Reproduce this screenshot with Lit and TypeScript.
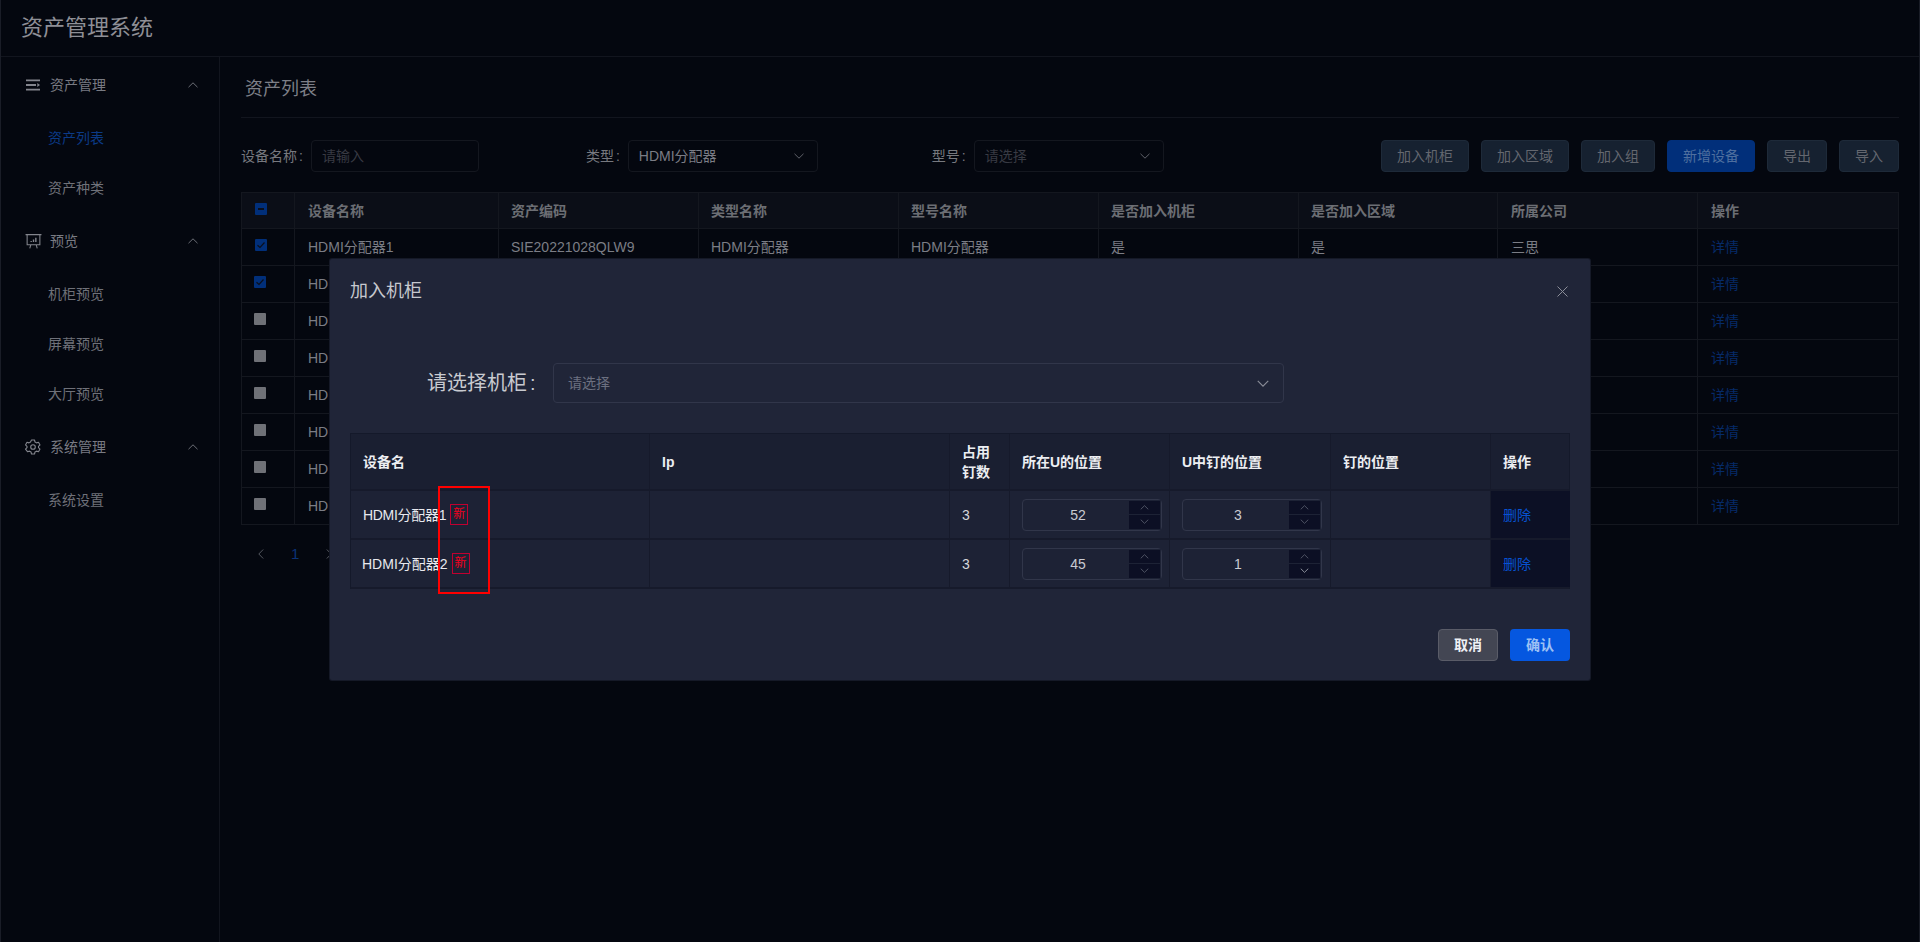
import { LitElement, html, css, svg } from "lit";
import { customElement } from "lit/decorators.js";

const up = (c = "chev") => svg`<svg class=${c} viewBox="0 0 10 6"><path d="M.5 5.2 5 .8l4.500 4.400" fill="none" stroke="currentColor" stroke-width="1"/></svg>`;
const down = (c = "chev") => svg`<svg class=${c} viewBox="0 0 10 6"><path d="M.5 .8 5 5.200 9.500 .8" fill="none" stroke="currentColor" stroke-width="1"/></svg>`;
const left = svg`<svg class="pg" viewBox="0 0 6 10"><path d="M5.200 .5.800 5l4.400 4.500" fill="none" stroke="currentColor"/></svg>`;
const right = svg`<svg class="pg" viewBox="0 0 6 10"><path d="M.8 .5 5.200 5 .8 9.500" fill="none" stroke="currentColor"/></svg>`;

const listIcon = svg`<svg class="mi" viewBox="0 0 16 16"><path d="M1 2.500h14v1.800H1zM1 7.100h10v1.800H1zM1 11.700h14v1.800H1z" fill="currentColor"/><path d="M12.300 6 15 8l-2.700 2z" fill="currentColor"/></svg>`;
const boardIcon = svg`<svg class="mi lg" viewBox="0 0 16 16" fill="none" stroke="currentColor" stroke-width="1"><path d="M.5 1.500h15M2 1.500v9.500h12V1.500M5.500 11l-1 3.500M10.500 11l1 3.500"/><path d="M5.800 8.500V7.500M8 8.500V6M10.200 8.500V4.500" stroke-width="1.300"/></svg>`;
const gearIcon = svg`<svg class="mi" viewBox="0 0 16 16" fill="none" stroke="currentColor" stroke-width="1.100"><path d="M6.500 1h3l.5 2 1.500.9 2-.6 1.500 2.600-1.500 1.400v1.400l1.500 1.400-1.500 2.600-2-.6-1.500.9-.5 2h-3l-.5-2-1.500-.9-2 .6L.5 10.100 2 8.700V7.300L.5 5.900 2 3.300l2 .6L5.500 3z" stroke-linejoin="round"/><circle cx="8" cy="8" r="2.300"/></svg>`;
const checkMark = svg`<svg viewBox="0 0 12 12"><path d="M2.500 6.200 5 8.500 9.500 3.500" fill="none" stroke="#0b0f1c" stroke-width="1.200"/></svg>`;

const menu = [
  { title: "资产管理", icon: listIcon, items: ["资产列表", "资产种类"] },
  { title: "预览", icon: boardIcon, items: ["机柜预览", "屏幕预览", "大厅预览"] },
  { title: "系统管理", icon: gearIcon, items: ["系统设置"] },
];
const cols = ["设备名称", "资产编码", "类型名称", "型号名称", "是否加入机柜", "是否加入区域", "所属公司", "操作"];

@customElement("app-root")
export class AppRoot extends LitElement {
  static styles = css`
    :host {
      display: block;
      height: 942px;
      overflow: hidden;
      position: relative;
      background: #04070f;
      font: 14px/20px "Liberation Sans", "Noto Sans CJK SC", sans-serif;
      color: #7b7d85;
      box-sizing: border-box;
      border-left: 1px solid #1a1d27;
      border-right: 1px solid #1a1d27;
    }
    * { box-sizing: border-box; }
    .top { height: 57px; padding-left: 20px; display: flex; align-items: center; border-bottom: 1px solid #12151e; font-size: 22px; line-height: 30px; color: #8e8f96; }
    .body { display: flex; height: 885px; }
    .side { width: 219px; flex: none; padding-top: 3px; border-right: 1px solid #12151e; }
    .mt { height: 50px; display: flex; align-items: center; padding-left: 24px; color: #797b83; }
    .mi { width: 16px; height: 16px; margin-right: 9px; flex: none; color: #83858d; }
    .mi.lg { width: 17px; height: 17px; margin-right: 8px; }
    .mt .chev { width: 10px; height: 6px; margin-left: auto; margin-right: 21px; color: #6c6e76; }
    .sub { padding: 3px 0; }
    .si { height: 50px; padding-left: 47px; display: flex; align-items: center; color: #6f7179; }
    .si.on { color: #0b3a86; }
    .main { flex: 1; padding: 0 20px 0 21px; min-width: 0; }
    .ptitle { height: 61px; margin-bottom: 21px; padding: 4px 0 0 4px; display: flex; align-items: center; font-size: 18px; border-bottom: 1px solid #12151e; color: #7d7f87; }
    .filters { display: flex; align-items: center; height: 33px; }
    .lab { color: #77797f; margin-right: 8px; white-space: nowrap; }
    .lab.mid { margin-left: 107px; }
    .lab.far { margin-left: 114px; }
    .colon { margin-left: 2px; }
    .box { height: 32px; width: 190px; border: 1px solid #14171f; border-radius: 4px; display: flex; align-items: center; padding: 0 10px; }
    .box.short { width: 168px; }
    .ph { color: #383a43; }
    .box .chev { width: 10px; height: 6px; margin-left: auto; margin-right: 3px; color: #5f6169; }
    .btns { margin-left: auto; display: flex; gap: 12px; }
    .btn { height: 32px; padding: 0 15px; background: #162130; border: 1px solid #1e2a39; border-radius: 4px; display: flex; align-items: center; color: #64676f; }
    .btn.pri { background: #012f7a; border-color: #012f7a; color: #4f6f9f; }
    .tbl { margin-top: 20px; width: 1658px; border: solid #14171f; border-width: 1px 1px 0 1px; }
    .row { display: grid; grid-template-columns: 53px 204px 200px 200px 200px 200px 199px 200px 200px; height: 37px; border-bottom: 1px solid #14171f; }
    .row.hd { height: 36px; background: #0b0e17; color: #6c6e74; font-weight: 700; }
    .c { padding-left: 12px; display: flex; align-items: center; border-right: 1px solid #14171f; white-space: nowrap; overflow: hidden; }
    .c:nth-child(2), .c:nth-child(n + 8) { padding-left: 13px; }
    .c:last-child { border-right: 0; }
    .lnk { color: #062a68; }
    .cb { width: 12px; height: 12px; margin-bottom: 4px; border-radius: 1px; background: #6f7177; display: block; }
    .cb.on { background: #012f7a; }
    .cb svg { display: block; width: 12px; height: 12px; }
    .cb.part { background: #012f7a; position: relative; }
    .cb.part i { position: absolute; left: 3px; right: 3px; top: 5px; height: 2px; background: #0b0f1c; }
    .shift { transform: translateX(1px); }
    .pager { display: flex; align-items: center; height: 26px; margin-top: 16px; color: #555860; padding-left: 17px; gap: 27px; }
    .pg { width: 6px; height: 10px; flex: none; }
    .cur { color: #0a3277; width: 8px; font-size: 15px; }
    .modal { position: absolute; left: 329px; top: 259px; width: 1260px; height: 421px; background: #202538; border-radius: 2px; color: #d5d6da; padding: 0 20px; box-shadow: 0 0 0 1px #151927; }
    .mh { height: 64px; display: flex; align-items: center; font-size: 18px; justify-content: space-between; color: #c6c8ce; }
    .x { width: 11px; height: 11px; margin-right: 2px; color: #8a8d98; }
    .pick { margin-top: 40px; display: flex; align-items: center; height: 40px; }
    .pl { margin-left: 77px; width: 126px; font-size: 20px; line-height: 26px; color: #c8cad0; white-space: nowrap; }
    .pl .colon { margin-left: 3px; }
    .sel { width: 731px; height: 40px; border: 1px solid #31364a; border-radius: 4px; display: flex; align-items: center; padding-left: 14px; color: #6c7080; }
    .sel .chev { width: 12px; height: 7px; margin-left: auto; margin-right: 14px; color: #8a8d98; }
    .mt2 { margin-top: 30px; width: 1220px; border: 1px solid #14192a; border-width: 1px 1px 0 1px; background: #1d2235; }
    .mr { display: grid; grid-template-columns: 299px 300px 60px 160px 161px 160px 79px; border-bottom: 2px solid #161a2b; height: 49px; }
    .mr.h { height: 57px; background: #1a1f31; }
    .mc { padding-left: 12px; display: flex; align-items: center; border-right: 1px solid #161a2b; color: #d5d6da; }
    .mr.h .mc { color: #eceef2; font-weight: 700; }
    .mc:last-child { border-right: 0; }
    .mc.fx { background: #0c1025; }
    .name { color: #e8e9ee; white-space: nowrap; }
    .r1 .name { letter-spacing: -.3px; }
    .r2 .name { margin-left: -1px; }
    .tag { width: 18px; height: 21px; margin-left: 4px; border: 1px solid #c00030; color: #f4001e; font-size: 12px; line-height: 18px; text-align: center; flex: none; }
    .del { color: #0652d2; }
    .num { width: 140px; height: 32px; border: 1px solid #31364a; border-radius: 4px; display: flex; }
    .v { flex: 1; text-align: center; line-height: 30px; color: #c9cbd2; padding-left: 4px; }
    .hs { width: 32px; display: flex; flex-direction: column; gap: 1px; padding: 1px 1px 1px 0; background: #1d2235; }
    .hs span { flex: 1; background: #0c0f24; display: flex; align-items: center; justify-content: center; color: #5c6070; }
    .hs span.b { color: #a5a8b3; }
    .hs .chev { width: 9px; height: 5px; }
    .mf { display: flex; justify-content: flex-end; gap: 12px; margin-top: 40px; }
    .mb { width: 60px; height: 32px; border-radius: 4px; display: flex; align-items: center; justify-content: center; font-weight: 700; }
    .mb.c1 { background: #434653; border: 1px solid #5a5c68; color: #eef0f4; }
    .mb.c2 { background: #0557e0; color: #9cc0f4; }
    .redbox { position: absolute; left: 437px; top: 486px; width: 52px; height: 108px; border: 2px solid #ff0000; }
  `;

  private row(i: number) {
    const n = i + 1;
    const state = i < 2 ? "on" : "";
    return html`<div class="row">
      <div class="c"><span class="cb ${state} ${i === 0 ? "shift" : ""}">${i < 2 ? checkMark : ""}</span></div>
      <div class="c">HDMI分配器${n}</div>
      <div class="c">SIE20221028QLW9</div>
      <div class="c">HDMI分配器</div>
      <div class="c">HDMI分配器</div>
      <div class="c">是</div>
      <div class="c">是</div>
      <div class="c">三思</div>
      <div class="c lnk">详情</div>
    </div>`;
  }

  private numBox(v: string, boldDown = false) {
    return html`<div class="num">
      <div class="v">${v}</div>
      <div class="hs"><span>${up()}</span><span class=${boldDown ? "b" : ""}>${down()}</span></div>
    </div>`;
  }

  private mrow(cls: string, name: string, a: string, b: string, boldB = false) {
    return html`<div class="mr ${cls}">
      <div class="mc"><span class="name">${name}</span><span class="tag">新</span></div>
      <div class="mc"></div>
      <div class="mc">3</div>
      <div class="mc">${this.numBox(a)}</div>
      <div class="mc">${this.numBox(b, boldB)}</div>
      <div class="mc"></div>
      <div class="mc fx"><span class="del">删除</span></div>
    </div>`;
  }

  render() {
    return html`
      <div class="top">资产管理系统</div>
      <div class="body">
        <aside class="side">
          ${menu.map(
            (m) => html`<div class="mt">${m.icon}<span>${m.title}</span>${up()}</div>
              <div class="sub">${m.items.map((s) => html`<div class="si ${s === "资产列表" ? "on" : ""}">${s}</div>`)}</div>`
          )}
        </aside>
        <main class="main">
          <div class="ptitle">资产列表</div>
          <div class="filters">
            <span class="lab">设备名称<span class="colon">:</span></span>
            <div class="box short ph">请输入</div>
            <span class="lab mid">类型<span class="colon">:</span></span>
            <div class="box">HDMI分配器${down()}</div>
            <span class="lab far">型号<span class="colon">:</span></span>
            <div class="box ph">请选择${down()}</div>
            <div class="btns">
              ${["加入机柜", "加入区域", "加入组"].map((b) => html`<div class="btn">${b}</div>`)}
              <div class="btn pri">新增设备</div>
              ${["导出", "导入"].map((b) => html`<div class="btn">${b}</div>`)}
            </div>
          </div>
          <div class="tbl">
            <div class="row hd">
              <div class="c"><span class="cb part shift"><i></i></span></div>
              ${cols.map((c) => html`<div class="c">${c}</div>`)}
            </div>
            ${[0, 1, 2, 3, 4, 5, 6, 7].map((i) => this.row(i))}
          </div>
          <div class="pager">${left}<span class="cur">1</span>${right}</div>
        </main>
      </div>

      <div class="modal">
        <div class="mh">加入机柜
          <svg class="x" viewBox="0 0 11 11"><path d="M.5 .5l10 10M10.500 .5l-10 10" stroke="currentColor" fill="none"/></svg>
        </div>
        <div class="pick">
          <div class="pl">请选择机柜<span class="colon">:</span></div>
          <div class="sel">请选择${down()}</div>
        </div>
        <div class="mt2">
          <div class="mr h">
            <div class="mc">设备名</div><div class="mc">Ip</div><div class="mc">占用<br />钉数</div>
            <div class="mc">所在U的位置</div><div class="mc">U中钉的位置</div><div class="mc">钉的位置</div><div class="mc">操作</div>
          </div>
          ${this.mrow("r1", "HDMI分配器1", "52", "3")}
          ${this.mrow("r2", "HDMI分配器2", "45", "1", true)}
        </div>
        <div class="mf"><div class="mb c1">取消</div><div class="mb c2">确认</div></div>
      </div>
      <div class="redbox"></div>
    `;
  }
}
